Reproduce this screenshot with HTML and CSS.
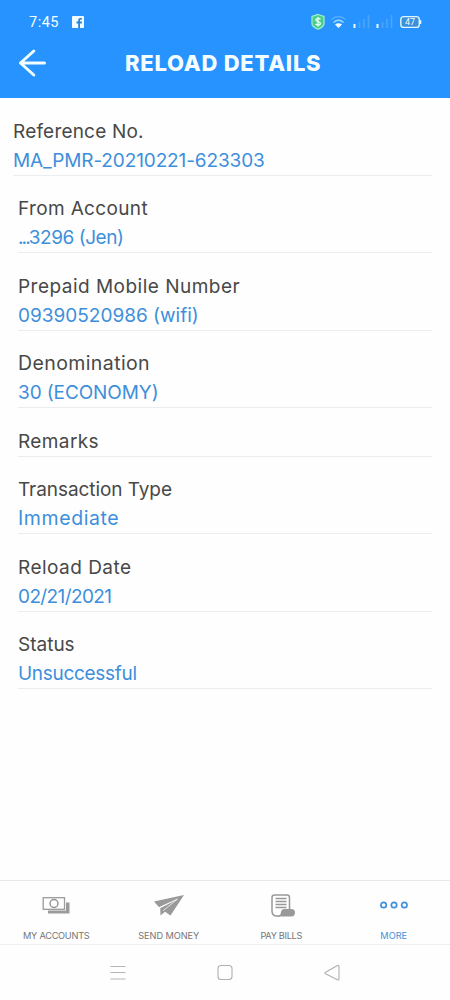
FILE: index.html
```
<!DOCTYPE html>
<html lang="en">
<head>
<meta charset="utf-8">
<title>Reload Details</title>
<link rel="stylesheet" href="styles.css">
</head>
<body>
<div class="screen">
  <header class="header">
    <div class="status-bar">
      <span class="clock">7:45</span>
      <svg class="fb" width="12" height="12" viewBox="0 0 12 12"><rect width="12" height="12" rx="0.8" fill="#f2fbff"/><path d="M6.200 12V7.400H4.500V5.600H6.200V4.300C6.200 2.700 7.200 2 8.500 2H10V3.500H9C8.300 3.500 8 3.900 8 4.600V5.600H10L9.800 7.400H8V12Z" fill="#2a83d6"/></svg>
      <svg class="indicators" width="112" height="18" viewBox="0 0 112 18">
        <path d="M7 1.5L13 3.5V11C13 13.5 10 15 7 16.2C4 15 1 13.5 1 11V3.5Z" fill="#48cf8c" stroke="#a5f0c9" stroke-width="1.2"/>
        <path d="M9.4 6.3C8.6 5 4.8 5 4.8 7C4.8 9.2 9.4 8 9.4 10.4C9.4 12.5 5.4 12.4 4.5 10.9M7 4V13.6" fill="none" stroke="#effff5" stroke-width="1.3"/>
        <path d="M20.5 6.5Q27.500 0.500 34.500 6.500" fill="none" stroke="#55adff" stroke-width="1.6"/>
        <path d="M22.500 9.500Q27.500 5 32.500 9.500" fill="none" stroke="#9bd8ff" stroke-width="1.6"/>
        <path d="M24 11.500Q27.500 8.800 31 11.500L27.500 15Z" fill="#f2fdff"/>
        <path d="M43.500 11V15M66.500 11V15" stroke="#effcff" stroke-width="2"/>
        <path d="M48.500 9V15M53 6V15M57.500 2V15M71.500 9V15M76 6V15M80.500 2V15" stroke="#4ba6fb" stroke-width="1.6"/>
        <rect x="89.800" y="3.600" width="18.500" height="10.800" rx="3" fill="#3b91dc" stroke="#dff5ff" stroke-width="1.4"/>
        <path d="M109.500 7V11" stroke="#dff5ff" stroke-width="1.600"/>
        <text x="99" y="12.200" text-anchor="middle" class="battery">47</text>
      </svg>
    </div>
    <div class="title-bar">
      <svg class="back" width="30" height="30" viewBox="0 0 30 30"><path d="M27.500 15H3.500M16.800 3L3.500 15L16.800 27" fill="none" stroke="#f4fdff" stroke-width="3" stroke-linecap="round" stroke-linejoin="round"/></svg>
      <h1 class="title">RELOAD DETAILS</h1>
    </div>
  </header>
  <main class="details">
    <div class="row row-reference"><span class="label">Reference No.</span><span class="value">MA_PMR-20210221-623303</span></div>
    <div class="row row-account"><span class="label">From Account</span><span class="value"><span class="dots">...</span>3296 (Jen)</span></div>
    <div class="row row-number"><span class="label">Prepaid Mobile Number</span><span class="value">09390520986 (wifi)</span></div>
    <div class="row row-denomination"><span class="label">Denomination</span><span class="value">30 (ECONOMY)</span></div>
    <div class="row row-remarks"><span class="label">Remarks</span></div>
    <div class="row row-type"><span class="label">Transaction Type</span><span class="value">Immediate</span></div>
    <div class="row row-date"><span class="label">Reload Date</span><span class="value">02/21/2021</span></div>
    <div class="row row-status"><span class="label">Status</span><span class="value">Unsuccessful</span></div>
  </main>
  <nav class="tabs">
    <a class="tab"><svg width="28" height="28" viewBox="0 0 28 28"><path d="M6 16.500H24V8.500H27.500V19.500H6Z" fill="#9b9b9b"/><rect x="1.200" y="3.700" width="21.300" height="11.600" fill="#fff" stroke="#9b9b9b" stroke-width="1.300"/><circle cx="12" cy="9.500" r="4" fill="none" stroke="#929292" stroke-width="1.400"/></svg><span class="tab-name accounts">MY ACCOUNTS</span></a>
    <a class="tab"><svg width="32" height="28" viewBox="0 0 32 28"><path d="M31 1L1 7.500L6 13.200L24 5.500L7.200 14.300L7.500 21.500L12 17.800L17.500 21.500Z" fill="#999"/><path d="M6 13.600L24.500 5L10 16.800" fill="none" stroke="#fff" stroke-width="0.700"/></svg><span class="tab-name send">SEND MONEY</span></a>
    <a class="tab"><svg class="bill-icon" width="28" height="28" viewBox="0 0 28 28"><path d="M20.500 15V3.500Q20.500 1 18 1H5.500Q3 1 3 3.500V17Q3 22 8 22H11" fill="none" stroke="#999" stroke-width="1.500"/><path d="M6.500 4.500H17.500M6.500 7.500H17.500M6.500 10.500H17.500M6.500 13.500H17.500" stroke="#999" stroke-width="1.300"/><path d="M8 22.500Q12 21.500 12 18Q12.500 15 15.500 15H23Q26 15.500 26 18.500Q26 22 23 22.500Z" fill="#999"/></svg><span class="tab-name bills">PAY BILLS</span></a>
    <a class="tab active"><svg width="28" height="28" viewBox="0 0 28 28"><g fill="none" stroke="#3d91dc" stroke-width="1.700"><circle cx="3.600" cy="11" r="2.700"/><circle cx="14" cy="11" r="2.700"/><circle cx="24.300" cy="11" r="2.700"/></g></svg><span class="tab-name more">MORE</span></a>
  </nav>
  <footer class="system-nav">
    <svg width="16" height="18" viewBox="0 0 16 18"><path d="M0.500 2.500H15.500M0.500 8.500H15.500M0.500 15H15.500" stroke="#b5b5b5" stroke-width="1.100"/></svg>
    <svg width="16" height="18" viewBox="0 0 16 18"><rect x="1" y="1.500" width="14" height="14" rx="3" fill="none" stroke="#b0b0b0" stroke-width="1.100"/></svg>
    <svg width="16" height="18" viewBox="0 0 16 18"><path d="M15 2.500V15Q15 16.500 13.500 15.800L1.500 9.700Q0.300 9 1.500 8.200L13.500 1.500Q15 1 15 2.500Z" fill="none" stroke="#b0b0b0" stroke-width="1.100"/></svg>
  </footer>
</div>
</body>
</html>
```
FILE: styles.css
```
* { box-sizing: border-box; }
body { margin: 0; background: #fefefe; font-family: Inter, "Open Sans", sans-serif; }
svg { display: block; flex: none; }
.screen { width: 450px; height: 1000px; display: flex; flex-direction: column; overflow: hidden; }
.header { height: 98.4px; background: #2693ff; color: #f4fdff; }
.status-bar { height: 44px; padding: 0 27px 0 29px; display: flex; align-items: center; }
.clock { font: 14.500px Roboto, sans-serif; letter-spacing: 0.500px; width: 43px; }
.indicators { margin-left: auto; }
.battery { font: 9px Roboto, sans-serif; fill: #effaff; }
.title-bar { height: 37px; padding-left: 17px; display: flex; align-items: center; }
.title { margin: 0 0 0 78px; font-size: 22px; font-weight: 800; line-height: 30px; letter-spacing: 0.750px; white-space: nowrap; }
.details { height: 781.600px; }
.row { margin: 0 18px; padding-top: 18.500px; border-bottom: 1px solid #ededed; display: flex; flex-direction: column; }
.row-reference { margin-left: 13px; }
.label, .value { font-size: 19px; line-height: 29px; white-space: nowrap; }
.label { color: #484848; }
.value { color: #3d8fdb; }

/* Tracking tuned per entry */
.row-reference .label { letter-spacing: 0.200px; }
.row-reference .value { letter-spacing: -0.120px; }
.row-account .label { letter-spacing: 0.350px; }
.row-account .value { letter-spacing: -0.450px; }
.row-account .dots { letter-spacing: -1.900px; }
.row-number .label { letter-spacing: 0.480px; }
.row-denomination .label { letter-spacing: 0.400px; font-size: 19.500px; }
.row-denomination .value { letter-spacing: -0.100px; }
.row-remarks .label { letter-spacing: 0.400px; }
.row-type .label { letter-spacing: -0.070px; }
.row-type .value { letter-spacing: 0.600px; font-size: 19.500px; }
.row-date .label { letter-spacing: 0.470px; }
.row-date .value { letter-spacing: -0.600px; }
.row-status .value { letter-spacing: -0.300px; }

.tabs { height: 65px; border-top: 1px solid #e9e9e9; border-bottom: 1px solid #eee; display: flex; }
.tab { width: 112.600px; padding-top: 13px; display: flex; flex-direction: column; align-items: center; }
.bill-icon { margin-left: 3px; }
.tab-name { margin-top: 7.500px; font-size: 9.200px; line-height: 14px; color: #757575; white-space: nowrap; }
.accounts { letter-spacing: -0.250px; }
.send { letter-spacing: -0.050px; }
.bills { letter-spacing: -0.300px; }
.active .tab-name { color: #3d91dc; }
.system-nav { height: 55px; padding: 19px 110px 0; display: flex; justify-content: space-between; }
```
